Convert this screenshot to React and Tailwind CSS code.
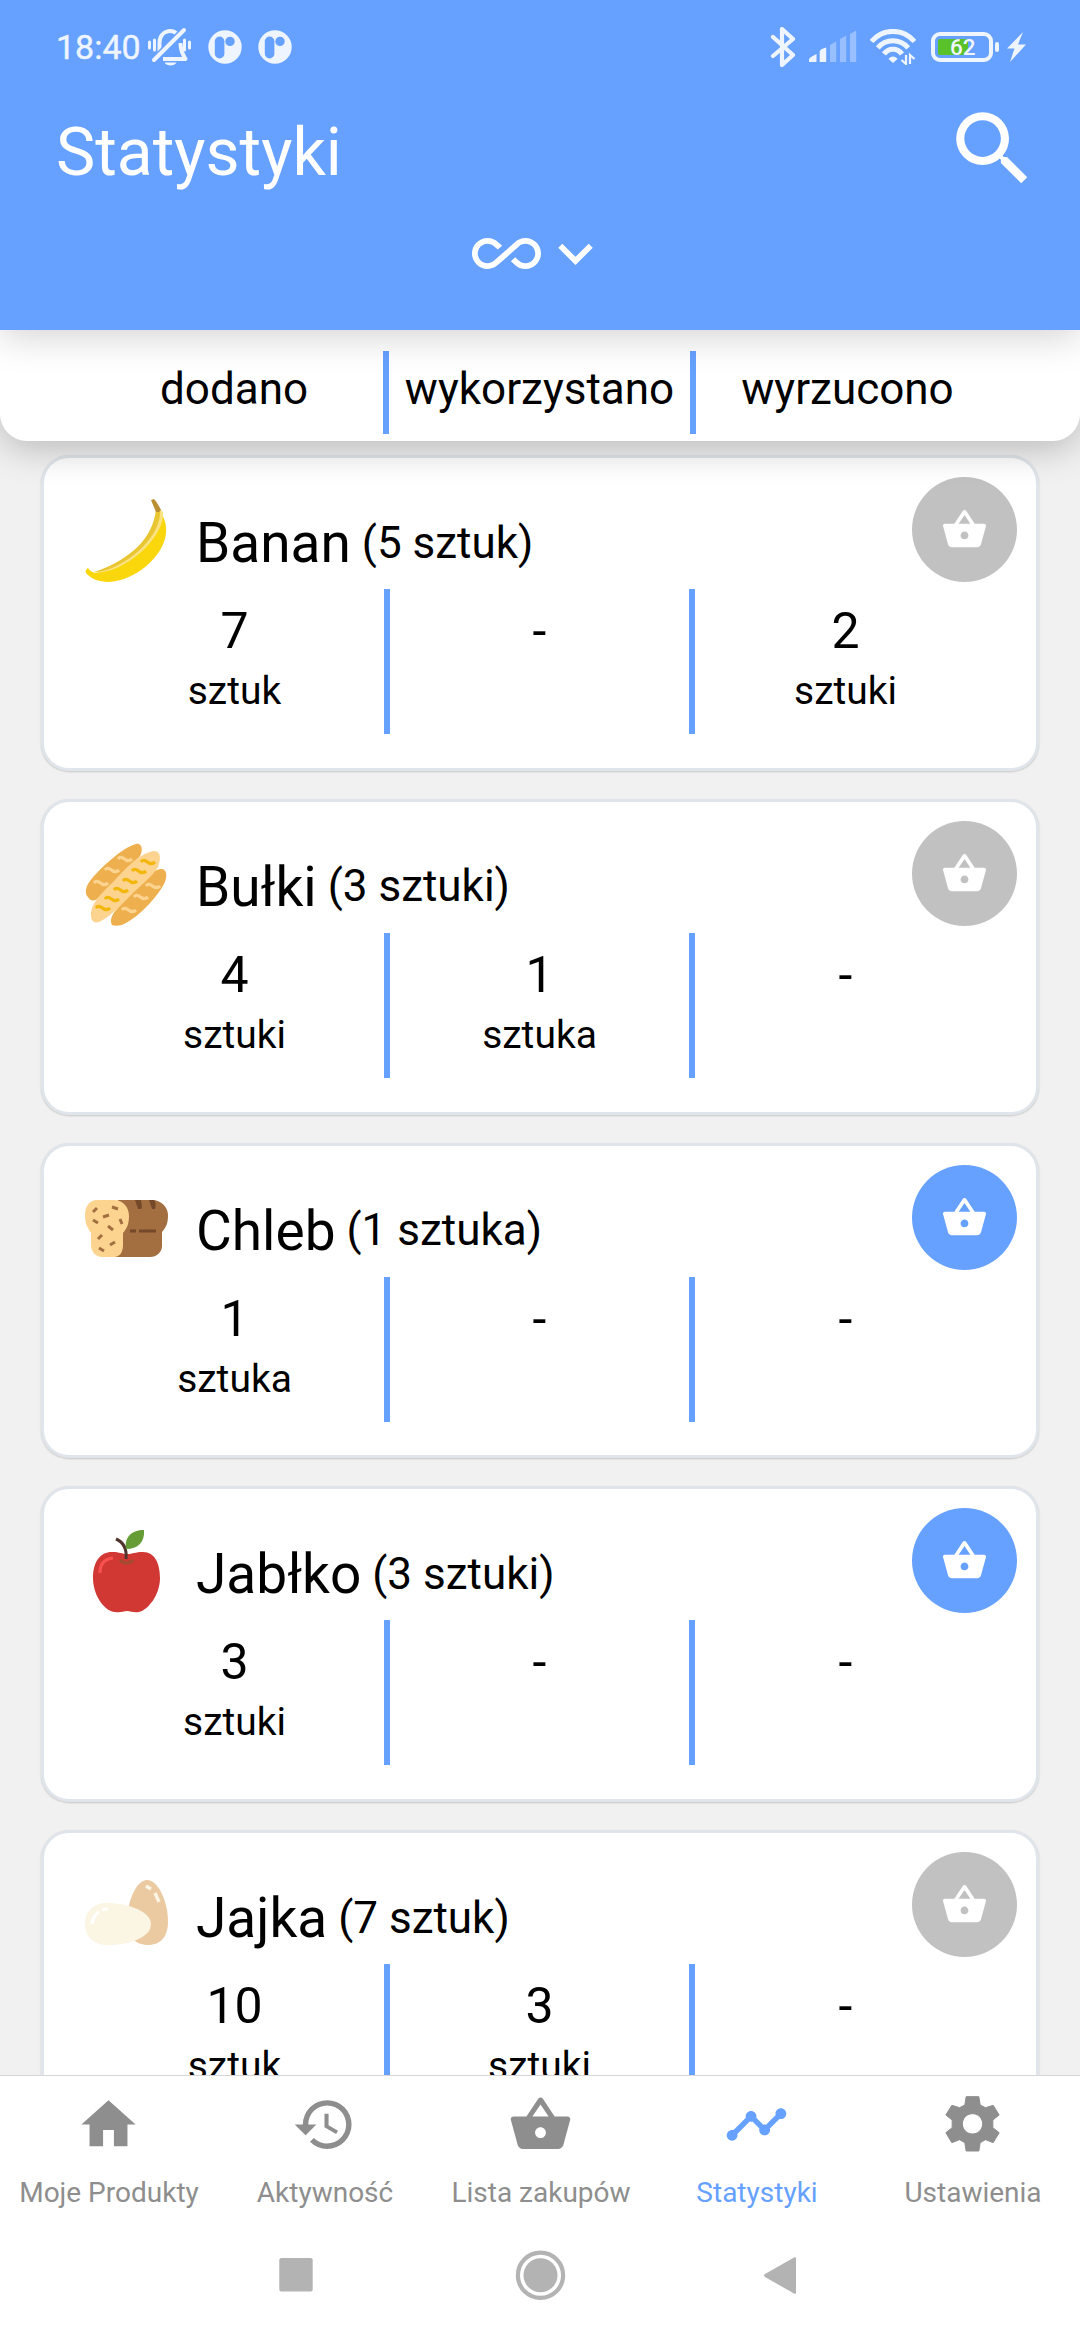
import { MdSearch, MdAllInclusive, MdKeyboardArrowDown, MdShoppingBasket, MdHistory, MdTimeline } from "react-icons/md";

function Banana() {
  return (
    <svg viewBox="0 0 83 83" className="size-[83px]">
      <path d="M73 11c6 5 9 15 8 23-2 24-32 48-57 49C13 83 5 79 1 74c-1-2 0-4 2-5 2 3 4 4 7 5 20-3 65-37 63-63Z" fill="#FAD70C" />
      <path d="M71 11C69 36 45 65 8 73c3 1 6 1 10 0 30-5 62-38 60-60l-3-3Z" fill="#FAE280" />
      <path d="M71 11C68 38 48 59 10 73c26-1 67-33 65-62Z" fill="#E9C532" />
      <path d="M66 1l3-1c3 3 5 7 7 11l-2 2h-3Z" fill="#B98F32" />
    </svg>
  );
}

function Rolls() {
  const wave = "c3-4 6 0 8 1s4 1 6-1";
  return (
    <svg viewBox="0 0 83 83" className="size-[83px]">
      <path d="M51 1c5-1 7 4 5 10C54 16 45 22 39 28 30 37 20 50 13 55 9 59 5 58 3 54-1 50 1 43 5 38 14 26 38 4 51 1Z" fill="#EEAF4E" />
      <path d="M75 26c7-1 8 7 4 15C72 54 54 74 39 81c-4 2-9 2-12 1-3-5 1-12 5-16C41 54 62 29 75 26Z" fill="#EEAF4E" />
      <path d="M70 8c6 1 6 8 3 16C68 33 57 41 48 50 37 61 25 74 16 78 9 82 5 77 6 69 8 57 21 46 32 35 42 24 56 9 70 8Z" fill="#FCD490" />
      <g fill="none" strokeWidth="3.2">
        <g stroke="#FCD490">
          <path d={"M33 16" + wave} /><path d={"M20 27" + wave} /><path d={"M9 40" + wave} />
          <path d={"M61 43" + wave} /><path d={"M49 54" + wave} /><path d={"M37 67" + wave} />
        </g>
        <g stroke="#F3B70C">
          <path d={"M56 19" + wave} /><path d={"M47 28" + wave} /><path d={"M38 38" + wave} />
          <path d={"M29 47" + wave} /><path d={"M20 56" + wave} /><path d={"M11 65" + wave} />
        </g>
      </g>
    </svg>
  );
}

function Bread() {
  return (
    <svg viewBox="0 0 83 83" className="size-[83px]">
      <path d="M33 13h34c9 0 16 7 16 15 0 9-2 12-6 17v14c0 6-5 11-12 11H30Z" fill="#A36F40" />
      <path d="M12 13h17c9 0 15 7 15 16 0 8-2 12-6 17v12c0 7-3 12-9 12H17C11 70 6 65 6 58V46C2 40 0 36 0 28c0-8 4-15 12-15Z" fill="#FCD490" />
      <path d="M50 13h6l1 7-1 2h-3Zm14 0h5c2 2 2 5 1 9h-3Z" fill="#74492A" />
      <path d="M45 44h6m3 0h17" fill="none" stroke="#74492A" strokeWidth="3" />
      <path d="M8 25l4-4M18 30l6-2m3-8 6 2M8 33l5 3m10 3 5 4m7-11 2 5M13 52l4-4m8 10 5-3m-16 6 5 3" fill="none" stroke="#A36F40" strokeWidth="3" />
    </svg>
  );
}

function Apple() {
  return (
    <svg viewBox="0 0 83 83" className="size-[83px]">
      <path d="M27 22c8 0 10 2 15 2 6 0 8-2 16-2 12 0 17 12 17 26 0 17-12 32-21 34-6 1-8-1-12-1s-6 2-12 1C19 81 8 65 8 48c0-16 7-26 19-26Z" fill="#D13834" />
      <path d="M15 43c0-9 4-14 13-15" fill="none" stroke="#F9514F" strokeWidth="3.2" />
      <path d="M35 30c4 4 9 4 13 0" fill="none" stroke="#A34A32" strokeWidth="3.2" />
      <path d="M31 9c7 3 11 10 10 20" fill="none" stroke="#51342D" strokeWidth="3" />
      <path d="M59 0c1 12-6 19-18 19C39 7 47 0 59 0Z" fill="#659C35" />
    </svg>
  );
}

function Eggs() {
  return (
    <svg viewBox="0 0 83 83" className="size-[83px]">
      <path d="M62 6c11 0 21 21 21 42 0 14-7 23-20 23S42 62 42 49C42 26 52 6 62 6Z" fill="#EBCAA1" />
      <path d="M22 29c22 0 44 9 44 21 0 14-23 21-43 21C9 71 0 63 0 50s9-21 22-21Z" fill="#FBF5E4" />
      <path d="M61 12l5 3m4 4 4 9" fill="none" stroke="#FCF5E4" strokeWidth="3.4" />
      <path d="M7 50c1-6 3-10 7-12m3-2c2-1 4-1 6-1" fill="none" stroke="#fff" strokeWidth="3.2" />
    </svg>
  );
}

const products = [
  { name: "Banan", amount: "(5 sztuk)", Icon: Banana, active: false, stats: [["7", "sztuk"], ["-", ""], ["2", "sztuki"]] },
  { name: "Bułki", amount: "(3 sztuki)", Icon: Rolls, active: false, stats: [["4", "sztuki"], ["1", "sztuka"], ["-", ""]] },
  { name: "Chleb", amount: "(1 sztuka)", Icon: Bread, active: true, stats: [["1", "sztuka"], ["-", ""], ["-", ""]] },
  { name: "Jabłko", amount: "(3 sztuki)", Icon: Apple, active: true, stats: [["3", "sztuki"], ["-", ""], ["-", ""]] },
  { name: "Jajka", amount: "(7 sztuk)", Icon: Eggs, active: false, stats: [["10", "sztuk"], ["3", "sztuki"], ["-", ""]] },
];

function ProductCard({ name, amount, Icon, active, stats }) {
  return (
    <article className="relative h-[315.75px] shrink-0 rounded-[28px] border-[3px] border-[#dfe5ea] bg-white shadow-[0_1px_2px_rgba(0,0,0,0.18)]">
      <div className="flex h-[131px] items-center pl-[41px] pt-[41px] pb-[7px]">
        <Icon />
        <h2 className="ml-[28px] pt-[5px] text-[55px] leading-[64px]">{name}</h2>
        <span className="ml-[11px] pt-[4px] text-[44px] leading-[52px]">{amount}</span>
      </div>
      <button className={"absolute right-[19px] top-[19px] flex size-[105px] items-center justify-center rounded-full text-white " + (active ? "bg-[#66a1ff]" : "bg-[#c1c1c1]")}>
        <MdShoppingBasket className="size-[47px]" />
      </button>
      <div className="ml-[41px] flex h-[145px] w-[911px] text-center">
        {stats.map(([value, unit], i) => (
          <div key={i} className={i < 2 ? "w-[305px] border-r-[6px] border-[#66a1ff]" : "w-[301px]"}>
            <div className="pt-[13px] text-[50px] leading-[58px]">{value}</div>
            <div className="pt-[8px] text-[39px] leading-[46px]">{unit}</div>
          </div>
        ))}
      </div>
    </article>
  );
}

function AppBadge() {
  return (
    <svg viewBox="0 0 34 34" className="size-[34px]">
      <circle cx="17" cy="17" r="16.7" fill="#eff5ff" />
      <rect x="6.8" y="6.5" width="9.6" height="22" rx="4.8" fill="#66a1ff" />
      <circle cx="22" cy="11.4" r="4.7" fill="#66a1ff" />
    </svg>
  );
}

function StatusBar() {
  return (
    <div className="flex h-[94px] items-center justify-between pl-[56px] pr-[54px] text-[#eff5ff]">
      <div className="flex items-center">
        <span className="w-[91px] text-[34px] leading-[40px] [-webkit-text-stroke:0.4px_currentColor]">18:40</span>
        <svg viewBox="0 0 46 40" className="h-[40px] w-[46px]" fill="none" stroke="currentColor">
          <path d="M12.5 25V16C12.5 1.500 29 1 32 10M33.500 16c0 9 3 12 5 16H16" strokeWidth="4" strokeLinejoin="round" />
          <path d="M7 33 36 4" strokeWidth="7" stroke="#66a1ff" />
          <path d="M7 33 37 3" strokeWidth="4" strokeLinecap="round" />
          <path d="M2.500 15v6m5-8v10m30-10v10m5-8v6" strokeWidth="3" strokeLinecap="round" />
          <path d="M17.500 35.500h12c-2 4-10 4-12 0Z" fill="currentColor" stroke="none" />
        </svg>
        <div className="ml-[15px] flex gap-[16px]">
          <AppBadge />
          <AppBadge />
        </div>
      </div>
      <div className="flex items-center">
        <svg viewBox="0 0 26 40" className="h-[40px] w-[26px]" fill="none" stroke="currentColor" strokeWidth="4.2" strokeLinejoin="round" strokeLinecap="round">
          <path d="M3 10 23 28 12 38V2L23 12 3 29" />
        </svg>
        <svg viewBox="0 0 48 32" className="ml-[13px] h-[32px] w-[48px]" fill="currentColor">
          <path d="M0 31v-3l2-2 5.500-3v8ZM10.700 31V20l2-2 4.500-1.500V31Z" />
          <path d="M21 31V14l6.200-3.500V31ZM31 31V8l6.200-3.500V31ZM41 31V3l6.200-3.500V31Z" opacity=".37" />
        </svg>
        <svg viewBox="0 0 46 36" className="ml-[13px] h-[36px] w-[46px]" fill="none" stroke="currentColor" strokeWidth="5">
          <path d="M1.500 12.500C13-1 33-1 44.500 12.500M7.800 18.800c8-9.500 22-9.500 30.400 0M14 25c4.500-6.500 13.500-6.500 18 0" />
          <path d="m23 34-4.500-4c2-3.500 7-3.500 9 0Z" fill="currentColor" stroke="none" />
          <path d="M36 26v9l-4.500-4M40 35v-9l4.500 4" strokeWidth="2.200" />
        </svg>
        <div className="ml-[15px] flex h-[30px] w-[62px] items-center rounded-[9px] border-[4px] border-current">
          <div className="relative ml-[3px] h-[16px] w-[30px] rounded-[2px] bg-[#59c22a]">
            <span className="absolute left-[12px] top-[-5px] text-[22.500px] font-medium leading-[27px]">62</span>
          </div>
        </div>
        <div className="ml-[2px] h-[10px] w-[4px] rounded-[2px] bg-current" />
        <svg viewBox="0 0 19 30" className="ml-[8px] h-[30px] w-[19px]" fill="currentColor">
          <path d="M16 0 0 16.500h7.500L3 30l16-17.500h-8Z" />
        </svg>
      </div>
    </div>
  );
}

const HomeIcon = (props) => (
  <svg viewBox="0 0 24 24" fill="currentColor" {...props}><path d="M10 20v-6h4v6h5v-8h3L12 3 2 12h3v8z" /></svg>
);
const GearIcon = (props) => (
  <svg viewBox="28.5 36 195 195" fill="currentColor" stroke="currentColor" strokeWidth="3" strokeLinejoin="round" {...props}>
    <path fillRule="evenodd" d="M107 50H145L149 75 165 83 188 76 206 105 187 120V143L206 158 188 188 165 179 149 188 145 213H107L103 188 87 179 64 188 46 158 65 143V120L46 105 64 76 87 83 103 75ZM126 101a30.500 30.500 0 1 0 .1 0Z" />
  </svg>
);

const tabs = [
  ["Moje Produkty", HomeIcon],
  ["Aktywność", MdHistory],
  ["Lista zakupów", MdShoppingBasket],
  ["Statystyki", MdTimeline],
  ["Ustawienia", GearIcon],
];

export default function App() {
  return (
    <div className="flex h-[2340px] w-[1080px] flex-col overflow-hidden bg-[#f1f1f1] font-['Roboto',sans-serif] text-black">
      <header className="relative z-20 h-[330px] shrink-0 bg-[#66a1ff] text-white shadow-[0_6px_36px_rgba(0,0,0,0.18)]">
        <StatusBar />
        <div className="flex h-[125px] justify-between pl-[56px] pr-[39px] pt-[6px]">
          <h1 className="pt-[14px] text-[66px] leading-[78px]">Statystyki</h1>
          <MdSearch className="size-[97.500px]" />
        </div>
        <div className="flex pl-[472px]">
          <MdAllInclusive className="size-[69px]" />
          <MdKeyboardArrowDown className="size-[69px]" />
        </div>
      </header>
      <div className="relative z-10 flex h-[111px] shrink-0 rounded-b-[27px] bg-white pl-[84px] pt-[21px] text-center text-[44px] leading-[76px] shadow-[0_8px_36px_rgba(0,0,0,0.23)]">
        <div className="h-[83px] w-[305px] border-r-[6px] border-[#66a1ff] pl-px">dodano</div>
        <div className="h-[83px] w-[307px] border-r-[6px] border-[#66a1ff]">wykorzystano</div>
        <div className="w-[303px]">wyrzucono</div>
      </div>
      <main className="flex min-h-0 flex-1 flex-col gap-[28px] overflow-hidden px-[41px] pt-[14px]">
        {products.map((p) => <ProductCard key={p.name} {...p} />)}
      </main>
      <nav className="flex h-[155px] shrink-0 border-t border-[#d6d6d6] bg-white pt-[16px] text-[#8e8e8e]">
        {tabs.map(([label, Icon]) => (
          <div key={label} className={"flex w-[216px] flex-col items-center " + (label === "Statystyki" ? "text-[#66a1ff]" : "")}>
            <Icon className="size-[65px]" />
            <span className="mt-[19px] whitespace-nowrap pl-[2px] text-[28px] leading-[33px]">{label}</span>
          </div>
        ))}
      </nav>
      <div className="flex h-[110px] shrink-0 justify-center bg-white pt-[20px]">
        <svg viewBox="0 0 520 50" className="h-[50px] w-[520px] overflow-visible" fill="#b3b3b3">
          <rect x="-0.700" y="8" width="33.400" height="33.400" rx="2" />
          <circle cx="260.500" cy="25.300" r="22.600" fill="none" stroke="#b3b3b3" strokeWidth="4.200" />
          <circle cx="260.500" cy="25.300" r="17" />
          <path d="M485 24 514 7.500q2-1 2 1v34q0 2-2 1L485 27q-2-1.500 0-3Z" />
        </svg>
      </div>
    </div>
  );
}
